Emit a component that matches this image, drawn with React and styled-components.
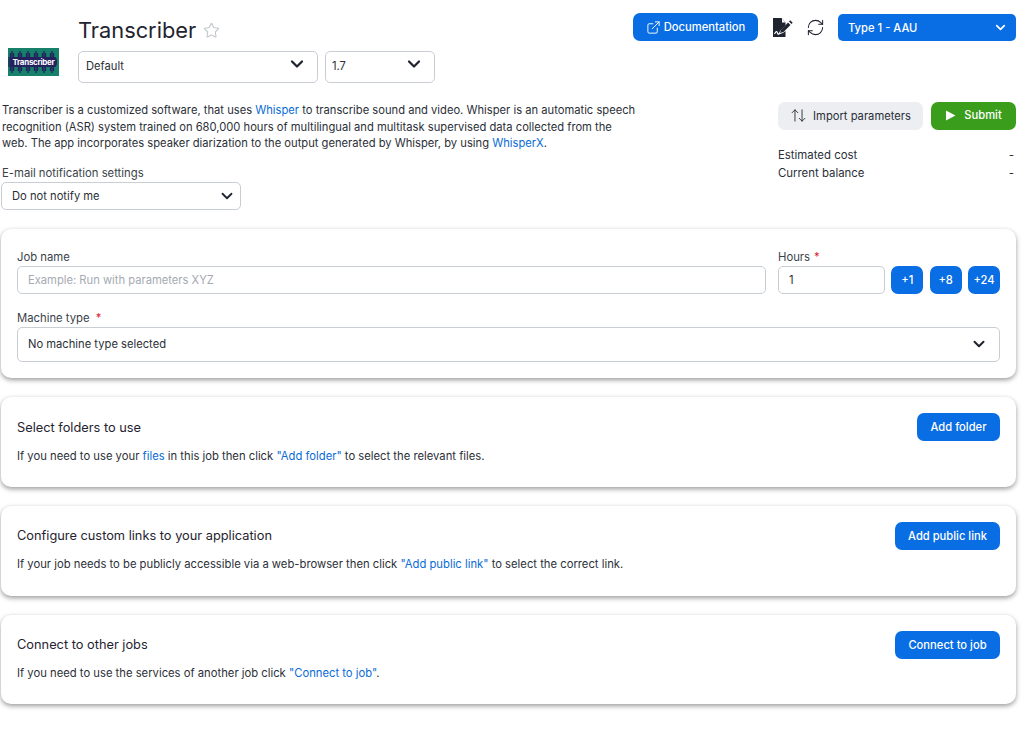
import React from "react";
import styled, { createGlobalStyle } from "styled-components";
import { ChevronDown, ExternalLink, RefreshCw, Star, ArrowUpDown } from "lucide-react";

const GlobalStyle = createGlobalStyle`
  html, body {
    margin: 0;
    padding: 0;
    background: #fff;
    font-family: Inter, "Noto Sans", sans-serif;
    font-size: 11.2px;
    color: #2b2f38;
  }
  * { box-sizing: border-box; }
`;

const Page = styled.div`
  width: 1016px;
  padding: 13px 0 0 1px;
`;

const Header = styled.header`
  display: flex;
  justify-content: space-between;
  height: 70px;
`;

const Identity = styled.div`
  display: flex;
  align-items: flex-end;
  padding-left: 7px;
  gap: 19px;
`;

const LogoBox = styled.svg`
  width: 51px;
  height: 28px;
  margin-bottom: 7px;
  display: block;
`;

const TitleColumn = styled.div`
  display: flex;
  flex-direction: column;
  gap: 3px;
  height: 70px;
`;

const TitleRow = styled.div`
  display: flex;
  align-items: center;
  gap: 7px;
  height: 35px;
`;

const Title = styled.h1`
  margin: 0;
  font-size: 21.8px;
  font-weight: 400;
  line-height: 35px;
  color: #1f2430;
`;

const SelectRow = styled.div`
  display: flex;
  gap: 7px;
`;

const SelectBox = styled.div`
  display: flex;
  align-items: center;
  justify-content: space-between;
  width: ${(p) => p.$width || "100%"};
  height: ${(p) => p.$height || "32px"};
  padding: ${(p) => p.$padding || "0 10px 2px 7px"};
  border: 1px solid #c9cdd4;
  border-radius: 5px;
  background: #fff;
  font-size: 11.2px;
  color: #2b2f38;
  svg { color: #1f2430; }
`;

const RaisedChevron = styled(ChevronDown)`
  margin-top: -5px;
`;

const Actions = styled.div`
  display: flex;
  align-items: flex-start;
`;

const BlueButton = styled.button`
  display: inline-flex;
  align-items: center;
  justify-content: center;
  gap: 3px;
  height: 28px;
  width: ${(p) => p.$width || "auto"};
  padding: 0;
  border: 0;
  border-radius: 7px;
  background: #096de3;
  color: #fff;
  font-family: inherit;
  font-size: 11.2px;
  font-weight: 500;
`;

const IconSlot = styled.span`
  display: flex;
  align-items: center;
  justify-content: center;
  margin-left: ${(p) => p.$left}px;
  width: ${(p) => p.$size}px;
  height: 28px;
  color: #1f2430;
`;

const TypeSelect = styled.div`
  display: flex;
  align-items: center;
  justify-content: space-between;
  width: 178px;
  height: 27px;
  margin-top: 1px;
  margin-left: 13px;
  padding: 0 8px 0 10px;
  border-radius: 5px;
  background: #096de3;
  color: #fff;
  font-size: 11.2px;
  font-weight: 500;
`;

const InfoRow = styled.div`
  display: flex;
  justify-content: space-between;
  margin-top: 19px;
  height: 127px;
`;

const InfoLeft = styled.div`
  width: 637px;
`;

const Description = styled.p`
  margin: 0;
  padding-left: 1px;
  font-size: 11.2px;
  line-height: 16.5px;
  color: #2b2f38;
`;

const Link = styled.a`
  color: #096bd6;
  text-decoration: none;
`;

const FieldLabel = styled.div`
  font-size: 11.3px;
  line-height: 14px;
  color: #3a3f4a;
`;

const NotifyField = styled.div`
  margin-top: 14px;
  display: flex;
  flex-direction: column;
  gap: 2px;
`;

const NotifyLabel = styled(FieldLabel)`
  padding-left: 1px;
`;

const InfoRight = styled.div`
  width: 238px;
`;

const SubmitRow = styled.div`
  display: flex;
  justify-content: space-between;
`;

const GreyButton = styled.button`
  display: inline-flex;
  align-items: center;
  justify-content: center;
  gap: 6px;
  width: 145px;
  height: 28px;
  padding: 0 0 1px;
  border: 0;
  border-radius: 7px;
  background: #eceef1;
  color: #2b2f38;
  font-family: inherit;
  font-size: 11.2px;
`;

const GreenButton = styled(BlueButton)`
  background: #3a9e1c;
  gap: 8px;
  padding-bottom: 2px;
`;

const CostTable = styled.div`
  margin-top: 18px;
  display: flex;
  flex-direction: column;
  gap: 4px;
`;

const CostRow = styled.div`
  display: flex;
  justify-content: space-between;
  padding-right: 2px;
  font-size: 11.4px;
  line-height: 14px;
  color: #2b2f38;
`;

const Card = styled.section`
  margin-bottom: 19px;
  padding: ${(p) => p.$padding || "16px 16px 0"};
  height: ${(p) => p.$height || "90px"};
  border-radius: 10px;
  background: #fff;
  box-shadow: 0 2px 5px rgba(0, 0, 0, 0.4);
`;

const JobGrid = styled.div`
  display: flex;
  gap: 12px;
`;

const NameField = styled.div`
  flex: 1;
  display: flex;
  flex-direction: column;
  gap: 2px;
`;

const HoursField = styled.div`
  width: 222px;
  display: flex;
  flex-direction: column;
  gap: 2px;
`;

const TextInput = styled.div`
  display: flex;
  align-items: center;
  height: 28px;
  width: ${(p) => p.$width || "100%"};
  padding-left: 10px;
  border: 1px solid #c9cdd4;
  border-radius: 5px;
  font-size: 11.2px;
  color: ${(p) => (p.$placeholder ? "#a6aab2" : "#2b2f38")};
`;

const HoursRow = styled.div`
  display: flex;
  justify-content: space-between;
`;

const Required = styled.span`
  color: #d8203a;
  margin-left: ${(p) => p.$left || "4px"};
`;

const MachineField = styled.div`
  margin-top: 17px;
  display: flex;
  flex-direction: column;
  gap: 2px;
`;

const SectionHead = styled.div`
  display: flex;
  justify-content: space-between;
  align-items: center;
  height: 28px;
`;

const SectionTitle = styled.h2`
  margin: ${(p) => (p.$lifted ? "-2px 0 0" : "0")};
  font-size: 12.8px;
  font-weight: 400;
  color: #1f2430;
`;

const SectionText = styled.p`
  margin: ${(p) => (p.$lifted ? "7px" : "8px")} 0 0;
  font-size: 11.25px;
  line-height: 14px;
  color: #2b2f38;
`;

function Logo() {
  const clumps = [4, 12, 20, 28, 36, 44];
  const offsets = [-3, -1.5, 0, 1.5, 3];
  const heights = [5, 9, 11, 9, 5];
  return (
    <LogoBox viewBox="0 0 51 28">
      <rect width="51" height="28" fill="#17806a" />
      {clumps.map((cx) =>
        offsets.map((dx, i) => (
          <rect key={cx + dx} x={cx + dx - 0.65} y={14 - heights[i]} width="1.3" height={heights[i] * 2} fill="#24215f" />
        ))
      )}
      <rect x="2" y="9" width="47" height="10" rx="4" fill="#24215f" />
      <text x="25.5" y="17" textAnchor="middle" fontFamily="Inter, sans-serif" fontSize="8" fontWeight="700" fill="#fff" letterSpacing="-0.3">
        Transcriber
      </text>
    </LogoBox>
  );
}

function SignatureIcon() {
  return (
    <svg width="21" height="19" viewBox="0 0 21 19">
      <path d="M1 0h8.5l4 4.5v3L8 13l-1.5 3.5L11 15l2.5-2v6H1z" fill="#1f2430" />
      <path d="M10 0.5v4h3.5z" fill="#fff" />
      <path d="M9 12l7-7.5 2.5 2.5-7 7-3.5 1z" fill="#1f2430" />
      <path d="M17 3.5l1.2-1.2 2.5 2.5-1.2 1.2z" fill="#1f2430" />
      <path d="M2.5 16c1.5-3 2.5-3 3 -1s1.5 1 2.5 0" fill="none" stroke="#fff" strokeWidth="1.1" />
    </svg>
  );
}

export default function App() {
  return (
    <Page>
      <GlobalStyle />
      <Header>
        <Identity>
          <Logo />
          <TitleColumn>
            <TitleRow>
              <Title>Transcriber</Title>
              <Star size={17} color="#c3c7ce" strokeWidth={1.6} />
            </TitleRow>
            <SelectRow>
              <SelectBox $width="240px">
                Default
                <RaisedChevron size={20} strokeWidth={2.7} />
              </SelectBox>
              <SelectBox $width="110px" $padding="0 10px 2px 6px">
                1.7
                <RaisedChevron size={20} strokeWidth={2.7} />
              </SelectBox>
            </SelectRow>
          </TitleColumn>
        </Identity>
        <Actions>
          <BlueButton $width="125px">
            <ExternalLink size={15} strokeWidth={1.5} />
            Documentation
          </BlueButton>
          <IconSlot $left={14} $size={21}>
            <SignatureIcon />
          </IconSlot>
          <IconSlot $left={13} $size={19}>
            <RefreshCw size={23} strokeWidth={1.3} />
          </IconSlot>
          <TypeSelect>
            Type 1 - AAU
            <ChevronDown size={15} strokeWidth={2.7} />
          </TypeSelect>
        </Actions>
      </Header>

      <InfoRow>
        <InfoLeft>
          <Description>
            Transcriber is a customized software, that uses <Link>Whisper</Link> to transcribe sound and video. Whisper is an automatic speech
            recognition (ASR) system trained on 680,000 hours of multilingual and multitask supervised data collected from the
            web. The app incorporates speaker diarization to the output generated by Whisper, by using <Link>WhisperX</Link>.
          </Description>
          <NotifyField>
            <NotifyLabel>E-mail notification settings</NotifyLabel>
            <SelectBox $width="240px" $height="28px" $padding="0 4px 0 10px">
              Do not notify me
              <ChevronDown size={18} strokeWidth={2.4} />
            </SelectBox>
          </NotifyField>
        </InfoLeft>
        <InfoRight>
          <SubmitRow>
            <GreyButton>
              <ArrowUpDown size={17} strokeWidth={1.3} />
              Import parameters
            </GreyButton>
            <GreenButton $width="85px">
              <svg width="11" height="11" viewBox="0 0 11 11">
                <path d="M1 0.5L10.5 5.5L1 10.5z" fill="#fff" />
              </svg>
              Submit
            </GreenButton>
          </SubmitRow>
          <CostTable>
            <CostRow>
              <span>Estimated cost</span>
              <span>-</span>
            </CostRow>
            <CostRow>
              <span>Current balance</span>
              <span>-</span>
            </CostRow>
          </CostTable>
        </InfoRight>
      </InfoRow>

      <Card $height="149px" $padding="21px 16px 0">
        <JobGrid>
          <NameField>
            <FieldLabel>Job name</FieldLabel>
            <TextInput $placeholder>Example: Run with parameters XYZ</TextInput>
          </NameField>
          <HoursField>
            <FieldLabel>
              Hours<Required>*</Required>
            </FieldLabel>
            <HoursRow>
              <TextInput $width="107px">1</TextInput>
              <BlueButton $width="32px">+1</BlueButton>
              <BlueButton $width="32px">+8</BlueButton>
              <BlueButton $width="32px">+24</BlueButton>
            </HoursRow>
          </HoursField>
        </JobGrid>
        <MachineField>
          <FieldLabel>
            Machine type<Required $left="6px">*</Required>
          </FieldLabel>
          <SelectBox $height="35px" $padding="0 11px 1px 10px">
            No machine type selected
            <ChevronDown size={18} strokeWidth={2.7} />
          </SelectBox>
        </MachineField>
      </Card>

      <Card>
        <SectionHead>
          <SectionTitle>Select folders to use</SectionTitle>
          <BlueButton $width="83px">Add folder</BlueButton>
        </SectionHead>
        <SectionText>
          If you need to use your <Link>files</Link> in this job then click <Link>"Add folder"</Link> to select the relevant files.
        </SectionText>
      </Card>

      <Card>
        <SectionHead>
          <SectionTitle $lifted>Configure custom links to your application</SectionTitle>
          <BlueButton $width="105px">Add public link</BlueButton>
        </SectionHead>
        <SectionText $lifted>
          If your job needs to be publicly accessible via a web-browser then click <Link>"Add public link"</Link> to select the correct link.
        </SectionText>
      </Card>

      <Card $height="89px">
        <SectionHead>
          <SectionTitle $lifted>Connect to other jobs</SectionTitle>
          <BlueButton $width="105px">Connect to job</BlueButton>
        </SectionHead>
        <SectionText $lifted>
          If you need to use the services of another job click <Link>"Connect to job"</Link>.
        </SectionText>
      </Card>
    </Page>
  );
}
